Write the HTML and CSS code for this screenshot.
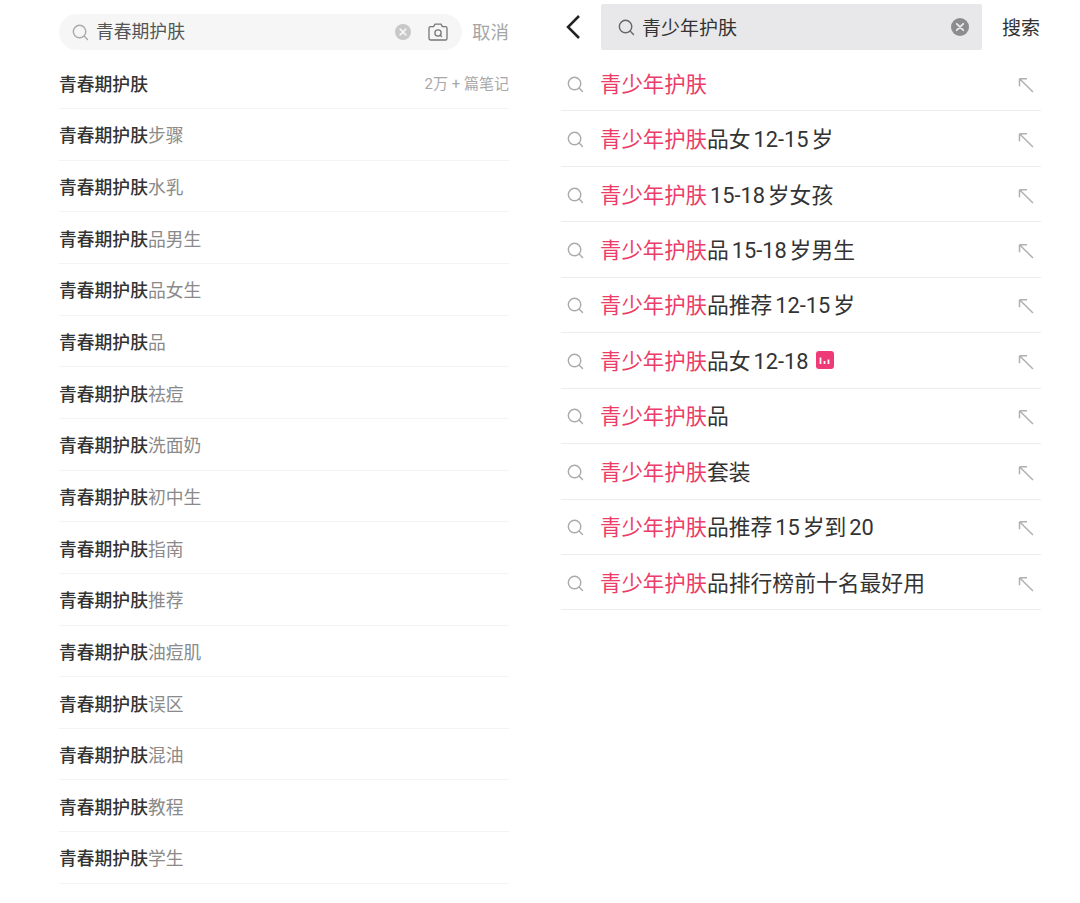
FILE: index.html
```html
<!DOCTYPE html>
<html lang="zh-CN">
<head>
<meta charset="utf-8">
<title>搜索</title>
<link rel="stylesheet" href="styles.css">
</head>
<body>
<svg class="defs" width="0" height="0" aria-hidden="true">
  <symbol id="search" viewBox="0 0 18 18"><circle cx="8" cy="8" r="6.6" fill="none" stroke="currentColor" stroke-width="1.5"/><path d="M12.8 12.8 16.4 16.4" fill="none" stroke="currentColor" stroke-width="1.5" stroke-linecap="round"/></symbol>
  <symbol id="clear" viewBox="0 0 18 18"><circle cx="9" cy="9" r="9" fill="currentColor"/><path d="M5.8 5.8 12.2 12.2M12.2 5.8 5.8 12.2" stroke="#fff" stroke-opacity=".8" stroke-width="1.9" stroke-linecap="round"/></symbol>
  <symbol id="fill" viewBox="0 0 16 16"><path d="M1.5 1.8H9M1.5 1.8V9.3M1.8 2 15 15" fill="none" stroke="currentColor" stroke-width="1.5"/></symbol>
</svg>
<main class="page">
  <section class="left">
    <div class="left-head">
      <div class="pill">
        <svg class="pill-search"><use href="#search"/></svg>
        <span class="pill-text">青春期护肤</span>
        <svg class="pill-clear"><use href="#clear"/></svg>
        <svg class="camera" viewBox="0 0 20 18"><path d="M1 5.2a1.6 1.6 0 0 1 1.6-1.6h3L7 1.2h6l1.4 2.4h3A1.6 1.6 0 0 1 19 5.2v10.2a1.6 1.6 0 0 1-1.6 1.6H2.600A1.600 1.600 0 0 1 1 15.400Z" fill="none" stroke="currentColor" stroke-width="1.300" stroke-linejoin="round"/><circle cx="10" cy="10" r="3.100" fill="none" stroke="currentColor" stroke-width="1.300"/><path d="M12.200 12.200 13.500 13.500" stroke="currentColor" stroke-width="1.300" stroke-linecap="round"/></svg>
      </div>
      <span class="cancel">取消</span>
    </div>
    <ul class="left-list">
      <li class="left-row"><b>青春期护肤</b><span class="count">2万 + 篇笔记</span></li>
      <li class="left-row"><b>青春期护肤</b>步骤</li>
      <li class="left-row"><b>青春期护肤</b>水乳</li>
      <li class="left-row"><b>青春期护肤</b>品男生</li>
      <li class="left-row"><b>青春期护肤</b>品女生</li>
      <li class="left-row"><b>青春期护肤</b>品</li>
      <li class="left-row"><b>青春期护肤</b>祛痘</li>
      <li class="left-row"><b>青春期护肤</b>洗面奶</li>
      <li class="left-row"><b>青春期护肤</b>初中生</li>
      <li class="left-row"><b>青春期护肤</b>指南</li>
      <li class="left-row"><b>青春期护肤</b>推荐</li>
      <li class="left-row"><b>青春期护肤</b>油痘肌</li>
      <li class="left-row"><b>青春期护肤</b>误区</li>
      <li class="left-row"><b>青春期护肤</b>混油</li>
      <li class="left-row"><b>青春期护肤</b>教程</li>
      <li class="left-row"><b>青春期护肤</b>学生</li>
    </ul>
  </section>
  <section class="right">
    <div class="right-head">
      <svg class="back" viewBox="0 0 16 26"><path d="M14 2 3 13 14 24" fill="none" stroke="currentColor" stroke-width="2.500"/></svg>
      <div class="box">
        <svg class="box-search"><use href="#search"/></svg>
        <span class="box-text">青少年护肤</span>
        <svg class="box-clear"><use href="#clear"/></svg>
      </div>
      <span class="go">搜索</span>
    </div>
    <ul class="right-list">
      <li class="right-row"><svg class="row-search"><use href="#search"/></svg><span class="term"><em>青少年护肤</em></span><svg class="fill"><use href="#fill"/></svg></li>
      <li class="right-row"><svg class="row-search"><use href="#search"/></svg><span class="term"><em>青少年护肤</em>品女 12-15 岁</span><svg class="fill"><use href="#fill"/></svg></li>
      <li class="right-row"><svg class="row-search"><use href="#search"/></svg><span class="term"><em>青少年护肤</em> 15-18 岁女孩</span><svg class="fill"><use href="#fill"/></svg></li>
      <li class="right-row"><svg class="row-search"><use href="#search"/></svg><span class="term"><em>青少年护肤</em>品 15-18 岁男生</span><svg class="fill"><use href="#fill"/></svg></li>
      <li class="right-row"><svg class="row-search"><use href="#search"/></svg><span class="term"><em>青少年护肤</em>品推荐 12-15 岁</span><svg class="fill"><use href="#fill"/></svg></li>
      <li class="right-row"><svg class="row-search"><use href="#search"/></svg><span class="term"><em>青少年护肤</em>品女 12-18</span><svg class="hot" viewBox="0 0 18 18"><rect width="18" height="18" rx="3" fill="#ee3a76"/><path d="M4.500 6.500V13M8.500 10V13M12.500 8.500V13" stroke="#fff" stroke-width="1.700"/></svg><svg class="fill"><use href="#fill"/></svg></li>
      <li class="right-row"><svg class="row-search"><use href="#search"/></svg><span class="term"><em>青少年护肤</em>品</span><svg class="fill"><use href="#fill"/></svg></li>
      <li class="right-row"><svg class="row-search"><use href="#search"/></svg><span class="term"><em>青少年护肤</em>套装</span><svg class="fill"><use href="#fill"/></svg></li>
      <li class="right-row"><svg class="row-search"><use href="#search"/></svg><span class="term"><em>青少年护肤</em>品推荐 15 岁到 20</span><svg class="fill"><use href="#fill"/></svg></li>
      <li class="right-row"><svg class="row-search"><use href="#search"/></svg><span class="term"><em>青少年护肤</em>品排行榜前十名最好用</span><svg class="fill"><use href="#fill"/></svg></li>
    </ul>
  </section>
</main>
</body>
</html>
```

FILE: styles.css
```css
* { box-sizing: border-box; }
html, body { margin: 0; padding: 0; background: #fff; }
body { font-family: "Roboto", "Noto Sans CJK SC", sans-serif; color: #333; }
ul { list-style: none; margin: 0; padding: 0; }
em { font-style: normal; }
.defs { position: absolute; }

.page { display: flex; width: 1080px; height: 903px; overflow: hidden; padding-left: 59px; gap: 52px; }

.left { width: 450px; flex: none; }
.left-head { display: flex; align-items: center; height: 36px; margin-top: 14px; margin-bottom: 7.500px; }
.pill { display: flex; align-items: center; width: 403px; height: 36px; background: #f6f6f6; border-radius: 18px; padding: 0 14px 0 13px; color: #a8a8a8; }
.pill-search { width: 17px; height: 17px; flex: none; color: #aaa; }
.pill-text { margin: -1px 0 0 7px; font-size: 17.800px; line-height: 36px; color: #555; }
.pill-clear { width: 16px; height: 16px; margin-left: auto; color: #c8c8c8; }
.camera { width: 20px; height: 18px; margin-left: 17px; color: #777; flex: none; }
.cancel { margin: -2px 0 0 auto; font-size: 18.500px; color: #a6a6a6; }

.left-row { display: flex; align-items: center; height: 51.650px; border-bottom: 1px solid #f4f4f4; font-size: 17.800px; color: #8a8a8a; white-space: nowrap; }
.left-row b { font-weight: 500; color: #333; }
.count { margin-left: auto; font-size: 15px; color: #a8a8a8; }

.right { width: 480px; flex: none; }
.right-head { display: flex; align-items: center; height: 46px; margin-top: 4px; margin-bottom: 6px; }
.back { width: 16px; height: 26px; margin-left: 4px; color: #222; flex: none; }
.box { display: flex; align-items: center; width: 381px; height: 46px; margin-left: 20px; padding: 0 13px 0 17px; background: #e8e8ea; border-radius: 2px; }
.box-search { width: 17px; height: 17px; color: #666; flex: none; }
.box-text { margin: -2px 0 0 7px; font-size: 19px; color: #333; }
.box-clear { width: 18px; height: 18px; margin-left: auto; color: #8c8c8e; }
.go { margin: -2px 1px 0 auto; font-size: 19px; color: #333; }

.right-row { display: flex; align-items: center; height: 55.450px; border-bottom: 1px solid #ececec; }
.row-search { width: 17px; height: 17px; margin: 2px 0 0 6px; color: #aaa; flex: none; }
.term { margin: -2px 0 0 16px; font-size: 21.800px; color: #333; white-space: nowrap; word-spacing: -2.500px; }
.term em { color: #ec3d68; font-size: 21.400px; }
.hot { width: 18px; height: 18px; margin-left: 7px; flex: none; }
.fill { width: 16px; height: 16px; margin: 3px 7px 0 auto; color: #b0b0b0; flex: none; }
```
